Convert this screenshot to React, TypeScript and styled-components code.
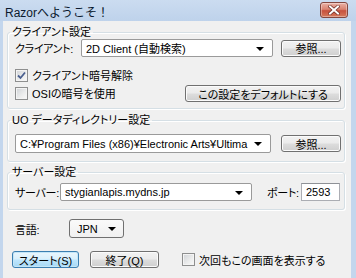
import React from 'react';
import styled, { createGlobalStyle, css } from 'styled-components';

const GlobalStyle = createGlobalStyle`
  html, body {
    margin: 0;
    padding: 0;
  }
  body {
    width: 356px;
    height: 278px;
    overflow: hidden;
    font-family: "Liberation Sans", "Noto Sans CJK JP", sans-serif;
    font-size: 11px;
    font-feature-settings: "palt" 1;
    color: #000;
  }
`;

const Window = styled.div`
  width: 356px;
  height: 278px;
  display: flex;
  flex-direction: column;
  background: #c3d6ed;
  overflow: hidden;
`;

const TitleBar = styled.div`
  height: 21px;
  flex: none;
  display: flex;
  align-items: center;
  justify-content: space-between;
  padding: 0 8px 0 5px;
  background: linear-gradient(#cbdcf0, #bed2eb);
`;

const Title = styled.span`
  font-size: 12px;
  color: #0b1a2e;
  margin-top: 1px;
  font-feature-settings: normal;
`;

const CloseButton = styled.div`
  width: 28px;
  height: 16px;
  box-sizing: border-box;
  margin-top: -1px;
  border: 1px solid #83473f;
  border-radius: 3px;
  display: flex;
  align-items: center;
  justify-content: center;
  background: linear-gradient(#eab2a6 0%, #d98371 45%, #c7513d 55%, #d57a5c 100%);
  box-shadow: inset 0 0 0 1px rgba(255, 255, 255, 0.35);
`;

const Body = styled.div`
  flex: 1;
  margin: 0 5px 0 3px;
  padding: 4px 6px 0 4px;
  background: #f0f0f0;
  display: flex;
  flex-direction: column;
`;

const Group = styled.fieldset<{ $mt: number; $pt: number; $pb: number }>`
  margin: ${(p) => p.$mt}px 0 0;
  padding: ${(p) => p.$pt}px 3px ${(p) => p.$pb}px 7px;
  border: 1px solid #d5dfe5;
  border-radius: 3px;
  box-shadow: inset 1px 1px 0 #fff, 1px 1px 0 #fff;
  min-width: 0;
`;

const Legend = styled.legend`
  padding: 0 2px;
  margin-left: -5px;
  line-height: 14px;
  height: 14px;
`;

const Row = styled.div<{ $h?: number; $between?: boolean; $pl?: number; $mt?: number }>`
  display: flex;
  align-items: center;
  height: ${(p) => p.$h ?? 18}px;
  margin-top: ${(p) => p.$mt ?? 0}px;
  padding-left: ${(p) => p.$pl ?? 0}px;
  ${(p) =>
    p.$between &&
    css`
      justify-content: space-between;
    `}
`;

const Label = styled.span<{ $w: number; $ml?: number }>`
  width: ${(p) => p.$w}px;
  margin-left: ${(p) => p.$ml ?? 0}px;
  flex: none;
  white-space: nowrap;
  letter-spacing: -0.3px;
`;

const Combo = styled.div<{ $w: number; $h?: number; $list?: boolean }>`
  width: ${(p) => p.$w}px;
  height: ${(p) => p.$h ?? 18}px;
  flex: none;
  box-sizing: border-box;
  display: flex;
  align-items: center;
  justify-content: space-between;
  gap: 4px;
  padding: 0 8px 0 4px;
  border: 1px solid #9a9a9a;
  border-radius: 2px;
  background: #fff;
  overflow: hidden;
  white-space: nowrap;
  ${(p) =>
    p.$list &&
    css`
      border-color: #707070;
      border-radius: 3px;
      background: linear-gradient(#fafafa, #f0f0f0);
      padding: 0 7px 0 7px;
    `}
`;

const ComboText = styled.span`
  overflow: hidden;
  white-space: nowrap;
  flex: 1;
  min-width: 0;
`;

const Arrow = styled.span`
  flex: none;
  width: 0;
  height: 0;
  border-left: 4px solid transparent;
  border-right: 4px solid transparent;
  border-top: 4px solid #000;
  margin-top: 1px;
`;

const TextBox = styled.div<{ $w: number }>`
  width: ${(p) => p.$w}px;
  height: 18px;
  box-sizing: border-box;
  border: 1px solid #abadb3;
  border-top-color: #8e9196;
  background: #fff;
  padding: 0 4px;
  display: flex;
  align-items: center;
`;

const Button = styled.div<{ $w: number; $ml?: number; $default?: boolean }>`
  width: ${(p) => p.$w}px;
  height: 17px;
  margin-left: ${(p) => p.$ml ?? 0}px;
  flex: none;
  box-sizing: border-box;
  display: flex;
  align-items: center;
  justify-content: center;
  border: 1px solid #707070;
  border-radius: 3px;
  background: linear-gradient(#f2f2f2 0%, #ebebeb 48%, #dddddd 52%, #cfcfcf 100%);
  box-shadow: inset 0 0 0 1px #fbfbfb;
  white-space: nowrap;
  ${(p) =>
    p.$default &&
    css`
      border-color: #3c7fb1;
      background: linear-gradient(#eaf6fd 0%, #d9f0fc 48%, #bee6fd 52%, #a7d9f5 100%);
      box-shadow: inset 0 0 0 1px #c4e6f8;
    `}
`;

const CheckRow = styled.label<{ $ml?: number }>`
  display: flex;
  align-items: center;
  gap: 4px;
  height: 18px;
  margin-left: ${(p) => p.$ml ?? 0}px;
  white-space: nowrap;
`;

const Box = styled.span`
  width: 13px;
  height: 13px;
  flex: none;
  box-sizing: border-box;
  border: 1px solid #8e8f8f;
  background: linear-gradient(135deg, #cfd2d6 0%, #eceded 60%, #fafafa 100%);
  box-shadow: inset 0 0 0 1px #f4f4f4;
  display: flex;
  align-items: center;
  justify-content: center;
`;

const LowerSection = styled.div`
  display: flex;
  justify-content: space-between;
  align-items: flex-end;
  margin-top: 9px;
`;

const Column = styled.div`
  display: flex;
  flex-direction: column;
`;

const BottomRow = styled.div`
  display: flex;
  align-items: center;
  height: 17px;
  margin-top: 13px;
  padding-left: 5px;
  gap: 11px;
`;

function Check({ checked }: { checked?: boolean }) {
  return (
    <Box>
      {checked && (
        <svg width="9" height="9" viewBox="0 0 9 9">
          <path d="M1 4.5 L3.5 7 L8 1.5" fill="none" stroke="#4a5f8f" strokeWidth="1.8" />
        </svg>
      )}
    </Box>
  );
}

export default function App() {
  return (
    <>
      <GlobalStyle />
      <Window>
        <TitleBar>
          <Title>Razorへようこそ！</Title>
          <CloseButton>
            <svg width="12" height="10" viewBox="0 0 12 10">
              <path d="M2 1.5 L10 8.5 M10 1.5 L2 8.5" stroke="#6b2a22" strokeWidth="3.4" strokeLinecap="square" />
              <path d="M2 1.5 L10 8.5 M10 1.5 L2 8.5" stroke="#fff" strokeWidth="2" strokeLinecap="square" />
            </svg>
          </CloseButton>
        </TitleBar>
        <Body>
          <Group $mt={0} $pt={0} $pb={6}>
            <Legend>クライアント設定</Legend>
            <Row>
              <Label $w={66}>クライアント:</Label>
              <Combo $w={192}>
                <ComboText>2D Client (自動検索)</ComboText>
                <Arrow />
              </Combo>
              <Button $w={60} $ml={8}>参照...</Button>
            </Row>
            <LowerSection>
              <Column>
                <CheckRow>
                  <Check checked />
                  クライアント暗号解除
                </CheckRow>
                <CheckRow>
                  <Check />
                  OSIの暗号を使用
                </CheckRow>
              </Column>
              <Button $w={156}>この設定をデフォルトにする</Button>
            </LowerSection>
          </Group>

          <Group $mt={4} $pt={7} $pb={8}>
            <Legend>UO データディレクトリー設定</Legend>
            <Row $h={19} $between>
              <Combo $w={256} $h={19}>
                <ComboText>C:¥Program Files (x86)¥Electronic Arts¥Ultima</ComboText>
                <Arrow />
              </Combo>
              <Button $w={60}>参照...</Button>
            </Row>
          </Group>

          <Group $mt={3} $pt={4} $pb={8}>
            <Legend>サーバー設定</Legend>
            <Row>
              <Label $w={45}>サーバー:</Label>
              <Combo $w={192}>
                <ComboText>stygianlapis.mydns.jp</ComboText>
                <Arrow />
              </Combo>
              <Label $w={34} $ml={15}>ポート:</Label>
              <TextBox $w={39}>2593</TextBox>
            </Row>
          </Group>

          <Row $h={19} $mt={9} $pl={8}>
            <Label $w={54}>言語:</Label>
            <Combo $w={55} $h={19} $list>
              <ComboText>JPN</ComboText>
              <Arrow />
            </Combo>
          </Row>

          <BottomRow>
            <Button $w={67} $default>スタート(S)</Button>
            <Button $w={69}>終了(Q)</Button>
            <CheckRow $ml={12}>
              <Check />
              次回もこの画面を表示する
            </CheckRow>
          </BottomRow>
        </Body>
      </Window>
    </>
  );
}
